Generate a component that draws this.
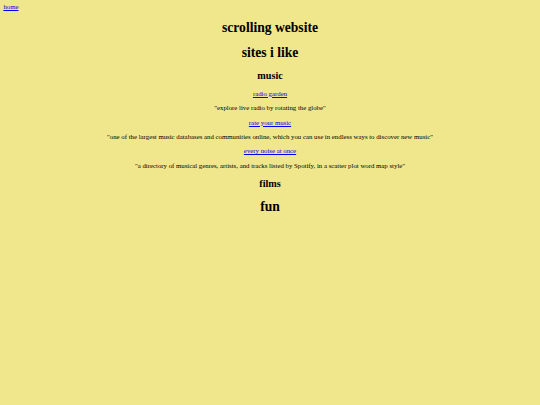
import React from 'react';

// Links and their little blurbs, grouped by section
const music = [
  { name: 'radio garden', blurb: '"explore live radio by rotating the globe"' },
  {
    name: 'rate your music',
    blurb:
      '"one of the largest music databases and communities online, which you can use in endless ways to discover new music"',
  },
  {
    name: 'every noise at once',
    blurb: '"a directory of musical genres, artists, and tracks listed by Spotify, in a scatter plot word map style"',
  },
];

const Title = ({ children }) => (
  <h1 className="text-center font-bold text-[13.6px] leading-[1.15] my-[9.2px]">{children}</h1>
);

const Section = ({ children }) => (
  <h2 className="text-center font-bold text-[10.2px] leading-[1.15] my-[8.4px]">{children}</h2>
);

const Para = ({ children }) => <p className="text-center my-[6.6px]">{children}</p>;

const Link = ({ children }) => (
  <a href="#" className="text-[#0000ee] underline">
    {children}
  </a>
);

const App = () => {
  return (
    <div
      className="min-h-screen bg-[#f0e68c] text-black pt-[3px] px-[3.4px] text-[6.8px] leading-[1.15]"
      style={{ fontFamily: '"Liberation Serif", "Times New Roman", serif' }}
    >
      <Link>home</Link>
      <Title>scrolling website</Title>
      <Title>sites i like</Title>
      <Section>music</Section>
      {music.map(item => (
        <React.Fragment key={item.name}>
          <Para>
            <Link>{item.name}</Link>
          </Para>
          <Para>{item.blurb}</Para>
        </React.Fragment>
      ))}
      <Section>films</Section>
      <Title>fun</Title>
    </div>
  );
};

export default App;
